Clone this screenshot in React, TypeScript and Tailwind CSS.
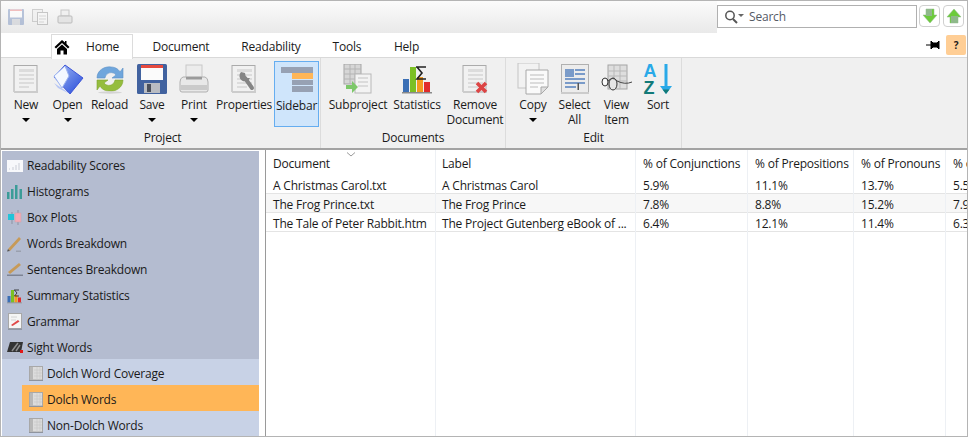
import React from "react";

const Doc = ({ children, w = 26, h = 30 }: { children?: React.ReactNode; w?: number; h?: number }) => (
  <svg width={w} height={h} viewBox="0 0 26 30" className="block">
    <rect x="1" y="1.5" width="23" height="26" fill="#f1f1f1" stroke="#ababab" />
    <rect x="1" y="27" width="24" height="2" fill="#cccccc" />
    <g fill="#dcdcdc">
      <rect x="6" y="5" width="15" height="3" />
      <rect x="6" y="10" width="15" height="2" />
      <rect x="6" y="14" width="15" height="2" />
      <rect x="6" y="18" width="15" height="2" />
      <rect x="6" y="22" width="10" height="2" />
    </g>
    {children}
  </svg>
);

const OpenIcon = () => (
  <svg width="32" height="32" viewBox="0 0 32 32" className="block">
    <defs>
      <linearGradient id="og" x1="0" y1="0" x2="1" y2="1">
        <stop offset="0" stopColor="#a9c0f5" />
        <stop offset="1" stopColor="#2248d8" />
      </linearGradient>
    </defs>
    <path d="M2 14 L13 2 L31 15 L18 31 Z" fill="url(#og)" stroke="#3c54d8" />
    <path d="M2 13 L13 3 L17 13 L10 25 Z" fill="#f4f8ff" stroke="#9db4f0" />
    <path d="M2 20 L14 28 L18 31 L6 25 Z" fill="#b6c6f5" />
  </svg>
);

const ReloadIcon = () => (
  <svg width="30" height="30" viewBox="0 0 30 30" className="block">
    <path d="M2 14 C2 6 10 2 16 3 C21 3 24 6 25 8 L28 4 V14 H17 L21 11 C18 7 11 8 10 14 Z" fill="#6fa6dc" stroke="#5d91c6" strokeWidth="0.6" />
    <path d="M28 16 C28 24 20 28 14 27 C9 27 6 24 5 22 L2 26 V16 H13 L9 19 C12 23 19 22 20 16 Z" fill="#95bd3e" stroke="#7fa62f" strokeWidth="0.6" />
    <ellipse cx="15" cy="28.5" rx="12" ry="1.2" fill="#d4d4d4" />
  </svg>
);

const SaveIcon = () => (
  <svg width="30" height="30" viewBox="0 0 30 30" className="block">
    <rect x="0" y="0" width="30" height="30" rx="1.5" fill="#41629f" />
    <rect x="4" y="1" width="22" height="15" fill="#fbfbfb" />
    <rect x="4" y="1" width="22" height="3" fill="#e64a3f" />
    <rect x="7" y="19" width="16" height="10" fill="#b9bcc2" />
    <rect x="10" y="20" width="4" height="8" fill="#4a4f5a" />
  </svg>
);

const PrintIcon = () => (
  <svg width="30" height="30" viewBox="0 0 30 30" className="block">
    <rect x="7" y="1" width="16" height="12" fill="#ececec" stroke="#c8c8c8" />
    <path d="M4 13 H26 Q29 14 29 18 V26 Q29 28 27 28 H3 Q1 28 1 26 V18 Q1 14 4 13 Z" fill="#e8e8e8" stroke="#b0b0b0" />
    <rect x="2" y="21" width="26" height="5" fill="#cacaca" />
    <rect x="7" y="13" width="16" height="2.5" fill="#9a9a9a" />
  </svg>
);

const SidebarIcon = () => (
  <svg width="32" height="26" viewBox="0 0 32 26" className="block">
    <rect x="0" y="0" width="32" height="6" fill="#97a1b3" />
    <rect x="11" y="6" width="21" height="6" fill="#ffb657" />
    <rect x="11" y="13" width="21" height="5" fill="#97a1b3" />
    <rect x="11" y="19" width="21" height="6" fill="#97a1b3" />
  </svg>
);

const StatsIcon = ({ s = 30 }: { s?: number }) => (
  <svg width={s} height={s} viewBox="0 0 30 30" className="block">
    <rect x="1" y="15" width="6" height="13" fill="#3b6fb5" />
    <rect x="8" y="3" width="6" height="25" fill="#7cc024" />
    <rect x="15" y="13" width="6" height="15" fill="#f59a1f" />
    <rect x="22" y="18" width="6" height="10" fill="#e12b2b" />
    <rect x="0" y="28" width="30" height="1.5" fill="#8a8a8a" />
    <path d="M14 3 H24 M15 3 L20 9 L15 15 H24" fill="none" stroke="#222" strokeWidth="1.6" />
  </svg>
);

const SubprojectIcon = () => (
  <svg width="30" height="30" viewBox="0 0 30 30" className="block">
    <rect x="1" y="0" width="17" height="20" fill="#d6d6d6" stroke="#a5a5a5" />
    <path d="M1 5 H18 M1 10 H18 M1 15 H18 M7 0 V20 M12 0 V20" stroke="#b4b4b4" fill="none" />
    <rect x="12" y="10" width="16" height="19" fill="#f3f3f3" stroke="#b8b8b8" />
    <path d="M15 14 H25 M15 18 H25 M15 22 H25" stroke="#d4d4d4" strokeWidth="1.5" />
    <path d="M3 21 H9 V17 L15 23 L9 29 V25 H3 Z" fill="#7dc86a" />
  </svg>
);

const CopyIcon = () => (
  <svg width="32" height="32" viewBox="0 0 32 32" className="block">
    <rect x="1" y="0" width="21" height="25" fill="#f2f2f2" stroke="#c4c4c4" />
    <path d="M9 7 H31 V24 L24 31 H9 Z" fill="#fafafa" stroke="#a8a8a8" />
    <path d="M31 24 H24 V31 Z" fill="#e0e0e0" stroke="#a8a8a8" />
    <path d="M13 12 H27 M13 16 H27 M13 20 H27 M13 24 H21" stroke="#bcbcbc" />
  </svg>
);

const SelectAllIcon = () => (
  <svg width="28" height="30" viewBox="0 0 28 30" className="block">
    <rect x="0.5" y="0.5" width="27" height="28" fill="#ececec" stroke="#b0b0b0" />
    <rect x="0" y="28" width="28" height="2" fill="#cccccc" />
    <rect x="4" y="5" width="9" height="8" fill="#7a9bc9" />
    <rect x="14" y="5" width="10" height="2" fill="#7a9bc9" />
    <rect x="14" y="9" width="10" height="2" fill="#7a9bc9" />
    <rect x="4" y="14" width="20" height="2" fill="#7a9bc9" />
    <rect x="4" y="18" width="20" height="2" fill="#7a9bc9" />
    <rect x="4" y="22" width="11" height="2" fill="#7a9bc9" />
    <rect x="16.5" y="19" width="1.5" height="7" fill="#555" />
  </svg>
);

const ViewItemIcon = () => (
  <svg width="32" height="30" viewBox="0 0 32 30" className="block">
    <rect x="7" y="1" width="19" height="24" fill="#dedede" stroke="#a4a4a4" />
    <path d="M7 7 H26 M7 12 H26 M7 17 H26 M13 1 V25 M19 1 V25" stroke="#b8b8b8" fill="none" />
    <ellipse cx="4" cy="18" rx="3" ry="4" fill="#fafafa" stroke="#333" />
    <ellipse cx="12" cy="20" rx="4" ry="6" fill="#e5e5e5" stroke="#333" />
    <path d="M7 17 Q12 12 16 17 Q24 21 31 18" fill="none" stroke="#444" />
  </svg>
);

const SortIcon = () => (
  <svg width="30" height="32" viewBox="0 0 30 32" className="block">
    <text x="0.5" y="14" fontFamily="Liberation Sans" fontWeight="700" fontSize="18" fill="#29a9e8">A</text>
    <text x="0.5" y="31" fontFamily="Liberation Sans" fontWeight="700" fontSize="18" fill="#127a78">Z</text>
    <rect x="21.5" y="1" width="3" height="23" fill="#29a9e8" />
    <path d="M17 23 H29 L23 31 Z" fill="#29a9e8" />
    <path d="M19.5 26.5 H26.5 L23 31 Z" fill="#127a78" />
  </svg>
);

const Caret = () => <span className="block w-0 h-0 border-l-[4px] border-r-[4px] border-t-[4px] border-l-transparent border-r-transparent border-t-black mt-[6px]" />;

const Btn = ({ label, icon, w, menu, active }: { label: React.ReactNode; icon: React.ReactNode; w: string; menu?: boolean; active?: boolean }) => (
  <div className={`${w} h-[66px] shrink-0 flex flex-col items-center pt-[2px] ${active ? "bg-[#cfe5fb] border border-[#65adf0]" : ""}`}>
    <div className="h-[31px] flex items-center justify-center">{icon}</div>
    <div className="mt-[3px] text-center leading-[15px] whitespace-nowrap">{label}</div>
    {menu && <Caret />}
  </div>
);

const Group = ({ title, w, children }: { title: string; w: string; children: React.ReactNode }) => (
  <div className={`${w} shrink-0 h-full flex flex-col border-r border-[#dcdcdc]`}>
    <div className="flex items-start pt-[3px]">{children}</div>
    <div className="text-center leading-[15px] mt-[3px]">{title}</div>
  </div>
);

const Tab = ({ children, w }: { children: React.ReactNode; w: string }) => (
  <div className={`${w} text-center shrink-0 pt-[3px]`}>{children}</div>
);

const s = "block shrink-0";
const SideIcons: Record<string, React.ReactNode> = {
  scores: (
    <svg width="16" height="12" viewBox="0 0 16 12" className={s}>
      <rect width="16" height="12" fill="#f7f8fb" />
      <path d="M2 9 h1 M6 7 v3 M9 5 v5 M12 3 v7" stroke="#c9cdd6" fill="none" />
    </svg>
  ),
  hist: (
    <svg width="16" height="14" viewBox="0 0 16 14" className={s}>
      <rect x="0" y="7" width="2.5" height="7" fill="#3b9c98" />
      <rect x="4" y="4" width="2.5" height="10" fill="#3b9c98" />
      <rect x="8" y="0" width="2.5" height="14" fill="#3b9c98" />
      <rect x="12.5" y="4" width="2.5" height="10" fill="#3b9c98" />
    </svg>
  ),
  box: (
    <svg width="14" height="16" viewBox="0 0 14 16" className={s}>
      <path d="M4 2 V14 M10 0 V15" stroke="#8c93a3" />
      <rect x="0" y="4" width="6" height="6" fill="#22c3d8" />
      <rect x="7" y="3" width="6" height="9" fill="#f4aab5" stroke="#c9a0a8" strokeWidth="0.5" />
    </svg>
  ),
  words: (
    <svg width="15" height="16" viewBox="0 0 15 16" className={s}>
      <path d="M1 13 L12 1 L14 3 L3 15 Z" fill="#c79a58" />
      <path d="M1 13 L3 15 L0 15.5 Z" fill="#555" />
      <rect x="9" y="14.5" width="5" height="1.5" fill="#9aa0ae" />
    </svg>
  ),
  sent: (
    <svg width="16" height="13" viewBox="0 0 16 13" className={s}>
      <path d="M1 9 L12 0 L14 2 L3 11 Z" fill="#c79a58" />
      <rect x="0" y="11.5" width="16" height="1.5" fill="#7d8394" />
    </svg>
  ),
  gram: (
    <svg width="14" height="17" viewBox="0 0 14 17" className={s}>
      <rect x="0.5" y="0.5" width="13" height="15" fill="#f5f5f5" stroke="#a8a8a8" />
      <rect x="0" y="15.5" width="14" height="1.5" fill="#9097a6" />
      <path d="M3 4 H9 M3 7 H8" stroke="#d4d4d4" />
      <path d="M3 12 L10 7 L11.5 8.5 L4.5 13 Z" fill="#e04848" />
    </svg>
  ),
  sight: (
    <svg width="16" height="11" viewBox="0 0 16 11" className={s}>
      <path d="M3 0 H16 L14 10 H0 Z" fill="#333" />
      <path d="M5 9 L11 1 M9 9 L13 3" stroke="#8d8d8d" strokeWidth="1.5" />
      <rect x="13" y="8" width="3" height="3" fill="#e01818" />
    </svg>
  ),
  list: (
    <svg width="14" height="15" viewBox="0 0 14 15" className={s}>
      <rect x="0.5" y="0.5" width="13" height="13.5" fill="#dcdcdc" stroke="#a8a8a8" />
      <rect x="1" y="1" width="3" height="13" fill="#b8b8b8" />
      <path d="M5 4 H13 M5 7 H13 M5 10 H13 M8 1 V14 M11 1 V14" stroke="#c8c8c8" strokeWidth="0.7" fill="none" />
      <rect x="0" y="14" width="14" height="1" fill="#8f949e" />
    </svg>
  ),
};

const SideRow = ({ icon, label }: { icon: React.ReactNode; label: string }) => (
  <div className="h-[26px] flex items-center pt-[3px] pl-[5px] gap-[5px]">
    <div className="w-[15px] flex justify-center">{icon}</div>
    <span>{label}</span>
  </div>
);

const SubRow = ({ label, active }: { label: string; active?: boolean }) => (
  <div className={`h-[26px] ml-[20px] flex items-center pt-[3px] pl-[6px] gap-[4px] ${active ? "bg-[#ffb657]" : ""}`}>
    <div className="w-[15px] flex justify-center">{SideIcons.list}</div>
    <span>{label}</span>
  </div>
);

const columns = [
  { w: "w-[170px]", p: "pl-[7px]", h: "Document", c: ["A Christmas Carol.txt", "The Frog Prince.txt", "The Tale of Peter Rabbit.htm"] },
  { w: "w-[200px]", p: "pl-[6px]", h: "Label", c: ["A Christmas Carol", "The Frog Prince", "The Project Gutenberg eBook of ..."] },
  { w: "w-[112px]", p: "pl-[7px]", h: "% of Conjunctions", c: ["5.9%", "7.8%", "6.4%"] },
  { w: "w-[106px]", p: "pl-[7px]", h: "% of Prepositions", c: ["11.1%", "8.8%", "12.1%"] },
  { w: "w-[92px]", p: "pl-[7px]", h: "% of Pronouns", c: ["13.7%", "15.2%", "11.4%"] },
  { w: "w-[30px]", p: "pl-[7px]", h: "% of", c: ["5.5%", "7.9%", "6.3%"] },
];

export default function App() {
  return (
    <div className="w-[968px] h-[437px] overflow-hidden bg-white border border-[#b4b4b4] flex flex-col text-[12px] text-[#1a1a1a] font-['Open_Sans','Noto_Sans',sans-serif] tracking-[-0.2px]">
      {/* title strip */}
      <div className="h-[32px] shrink-0 flex">
        <div className="w-[716px] h-full bg-gradient-to-b from-[#fbfbfb] to-[#e9e9e9] flex items-center pl-[7px] gap-[8px]">
          <svg width="16" height="16" viewBox="0 0 16 16" className="opacity-50 block">
            <rect width="16" height="16" rx="1" fill="#7b93c0" />
            <rect x="2" y="0.5" width="12" height="8" fill="#fff" />
            <rect x="2" y="0.5" width="12" height="1.5" fill="#e88" />
            <rect x="4" y="10" width="8" height="6" fill="#c5c8cf" />
          </svg>
          <svg width="16" height="16" viewBox="0 0 16 16" className="opacity-50 block">
            <rect x="0.5" y="0.5" width="10" height="12" fill="#eee" stroke="#aaa" />
            <rect x="5.5" y="3.5" width="10" height="12" fill="#f8f8f8" stroke="#999" />
            <path d="M7 7 H14 M7 10 H14 M7 13 H12" stroke="#bbb" />
          </svg>
          <svg width="16" height="16" viewBox="0 0 16 16" className="opacity-60 block ml-[1px]">
            <rect x="4" y="1" width="8" height="6" fill="#eee" stroke="#aaa" />
            <rect x="1" y="7" width="14" height="7" rx="1" fill="#ddd" stroke="#999" />
          </svg>
        </div>
        <div className="flex-1 flex items-start pt-[4px]">
          <div className="w-[200px] h-[23px] border border-[#b0b0b0] flex items-center pl-[6px] bg-white">
            <svg width="20" height="14" viewBox="0 0 20 14" className="block">
              <circle cx="6" cy="5.5" r="4.2" fill="none" stroke="#555" strokeWidth="1.5" />
              <path d="M9 9 L13 13" stroke="#555" strokeWidth="2" />
              <path d="M14 4 H20 L17 7 Z" fill="#666" />
            </svg>
            <span className="ml-[5px] text-[#555a66]">Search</span>
          </div>
          <div className="ml-[2px] w-[21px] h-[22px] rounded-[4px] border border-[#d0d0d0] flex items-center justify-center">
            <svg width="16" height="16" viewBox="0 0 16 16" className="block"><path d="M4 1 H12 V7 H15 L8 15 L1 7 H4 Z" fill="#6ccb3a" stroke="#8fb98a" strokeWidth="0.5" /><path d="M4 1 H10 V8 H4 Z" fill="#8fb98a" /></svg>
          </div>
          <div className="ml-[3px] w-[21px] h-[22px] rounded-[4px] border border-[#d0d0d0] flex items-center justify-center">
            <svg width="16" height="16" viewBox="0 0 16 16" className="block"><path d="M4 15 H12 V9 H15 L8 1 L1 9 H4 Z" fill="#6ccb3a" stroke="#8fb98a" strokeWidth="0.5" /><path d="M5 15 H12 V8 H5 Z" fill="#8fb98a" /></svg>
          </div>
        </div>
      </div>
      {/* tabs */}
      <div className="h-[24px] shrink-0 flex items-center relative pl-[50px]">
        <div className="w-[82px] h-[25px] mb-[-2px] border border-b-0 border-[#dcdcdc] bg-white flex items-center shrink-0">
          <svg width="16" height="16" viewBox="0 0 16 16" className="block ml-[2px]">
            <path d="M8 1 L0.5 8 L2 9.5 L8 4 L14 9.5 L15.5 8 L12.5 5 V2 H11 V3.6 Z" fill="#000" />
            <path d="M3 10 L8 5.5 L13 10 V15.5 H9.5 V11.5 H6.5 V15.5 H3 Z" fill="#000" />
          </svg>
          <span className="ml-[16px]">Home</span>
        </div>
        <Tab w="w-[96px]">Document</Tab>
        <Tab w="w-[84px]">Readability</Tab>
        <Tab w="w-[68px]">Tools</Tab>
        <Tab w="w-[51px]">Help</Tab>
        <div className="ml-auto mr-[1px] flex items-center gap-[6px]">
          <svg width="14" height="10" viewBox="0 0 14 10" className="block">
            <path d="M0 5 H5 M5 1 L7 3 H11 L13 1 V9 L11 7 H7 L5 9 Z" stroke="#000" fill="#000" />
          </svg>
          <div className="w-[20px] h-[20px] bg-[#ffce95] rounded-[2px] flex items-center justify-center text-[10px] font-bold leading-none">?</div>
        </div>
      </div>
      {/* ribbon */}
      <div className="h-[93px] shrink-0 bg-[#f0f0f0] border-t border-[#d9d9d9] border-b-2 border-b-[#a3a3a3] flex pl-[4px]">
        <Group title="Project" w="w-[316px]">
          <Btn w="w-[42px]" menu label="New" icon={<Doc />} />
          <Btn w="w-[41px]" menu label="Open" icon={<OpenIcon />} />
          <Btn w="w-[43px]" label="Reload" icon={<ReloadIcon />} />
          <Btn w="w-[42px]" menu label="Save" icon={<SaveIcon />} />
          <Btn w="w-[42px]" menu label="Print" icon={<PrintIcon />} />
          <Btn w="w-[58px]" label="Properties" icon={
            <Doc>
              <path d="M14 14 L21 24" stroke="#858585" strokeWidth="4" strokeLinecap="round" />
              <path d="M10 8 A5.5 5.5 0 1 0 19 14 L15 14 L14 9 Z" fill="#858585" />
            </Doc>
          } />
          <Btn w="w-[45px] ml-[1px]" active label="Sidebar" icon={<SidebarIcon />} />
        </Group>
        <Group title="Documents" w="w-[185px]">
          <Btn w="w-[60px] ml-[7px]" label="Subproject" icon={<SubprojectIcon />} />
          <Btn w="w-[52px] ml-[3px]" label="Statistics" icon={<StatsIcon />} />
          <Btn w="w-[58px] ml-[3px]" label={<>Remove<br />Document</>} icon={
            <Doc><path d="M15 19 L24 28 M24 19 L15 28" stroke="#dc4444" strokeWidth="3.6" /></Doc>
          } />
        </Group>
        <Group title="Edit" w="w-[176px]">
          <Btn w="w-[42px] ml-[6px]" menu label="Copy" icon={<CopyIcon />} />
          <Btn w="w-[41px]" label={<>Select<br />All</>} icon={<SelectAllIcon />} />
          <Btn w="w-[43px]" label={<>View<br />Item</>} icon={<ViewItemIcon />} />
          <Btn w="w-[40px]" label="Sort" icon={<SortIcon />} />
        </Group>
      </div>
      {/* main */}
      <div className="flex-1 min-h-0 flex">
        <div className="w-[257px] shrink-0 ml-[1px] mt-[1px] bg-[#b4bcd0] overflow-hidden">
          <SideRow icon={SideIcons.scores} label="Readability Scores" />
          <SideRow icon={SideIcons.hist} label="Histograms" />
          <SideRow icon={SideIcons.box} label="Box Plots" />
          <SideRow icon={SideIcons.words} label="Words Breakdown" />
          <SideRow icon={SideIcons.sent} label="Sentences Breakdown" />
          <SideRow icon={<StatsIcon s={16} />} label="Summary Statistics" />
          <SideRow icon={SideIcons.gram} label="Grammar" />
          <SideRow icon={SideIcons.sight} label="Sight Words" />
          <div className="bg-[#c8d2e6] h-[80px]">
            <SubRow label="Dolch Word Coverage" />
            <SubRow active label="Dolch Words" />
            <SubRow label="Non-Dolch Words" />
          </div>
        </div>
        <div className="flex-1 min-w-0 ml-[6px] border-l border-[#9a9a9a] flex relative overflow-hidden">
          <svg width="10" height="5" viewBox="0 0 10 5" className="absolute left-[80px] top-[2px]"><path d="M1 0.5 L5 4 L9 0.5" fill="none" stroke="#999" /></svg>
          {columns.map((col) => (
            <div key={col.h} className={`${col.w} shrink-0 h-full border-r border-[#edf0f4] overflow-hidden`}>
              <div className={`h-[25px] ${col.p} flex items-center whitespace-nowrap pt-[3px]`}>{col.h}</div>
              <div className={`h-[19px] ${col.p} flex items-center whitespace-nowrap border-b border-[#e4e4e4] pt-[3px]`}>{col.c[0]}</div>
              <div className={`h-[19px] ${col.p} flex items-center whitespace-nowrap border-b border-[#e4e4e4] bg-[#f7f7f7] pt-[3px]`}>{col.c[1]}</div>
              <div className={`h-[19px] ${col.p} flex items-center whitespace-nowrap border-b border-[#e4e4e4] pt-[3px]`}>{col.c[2]}</div>
            </div>
          ))}
        </div>
      </div>
    </div>
  );
}
